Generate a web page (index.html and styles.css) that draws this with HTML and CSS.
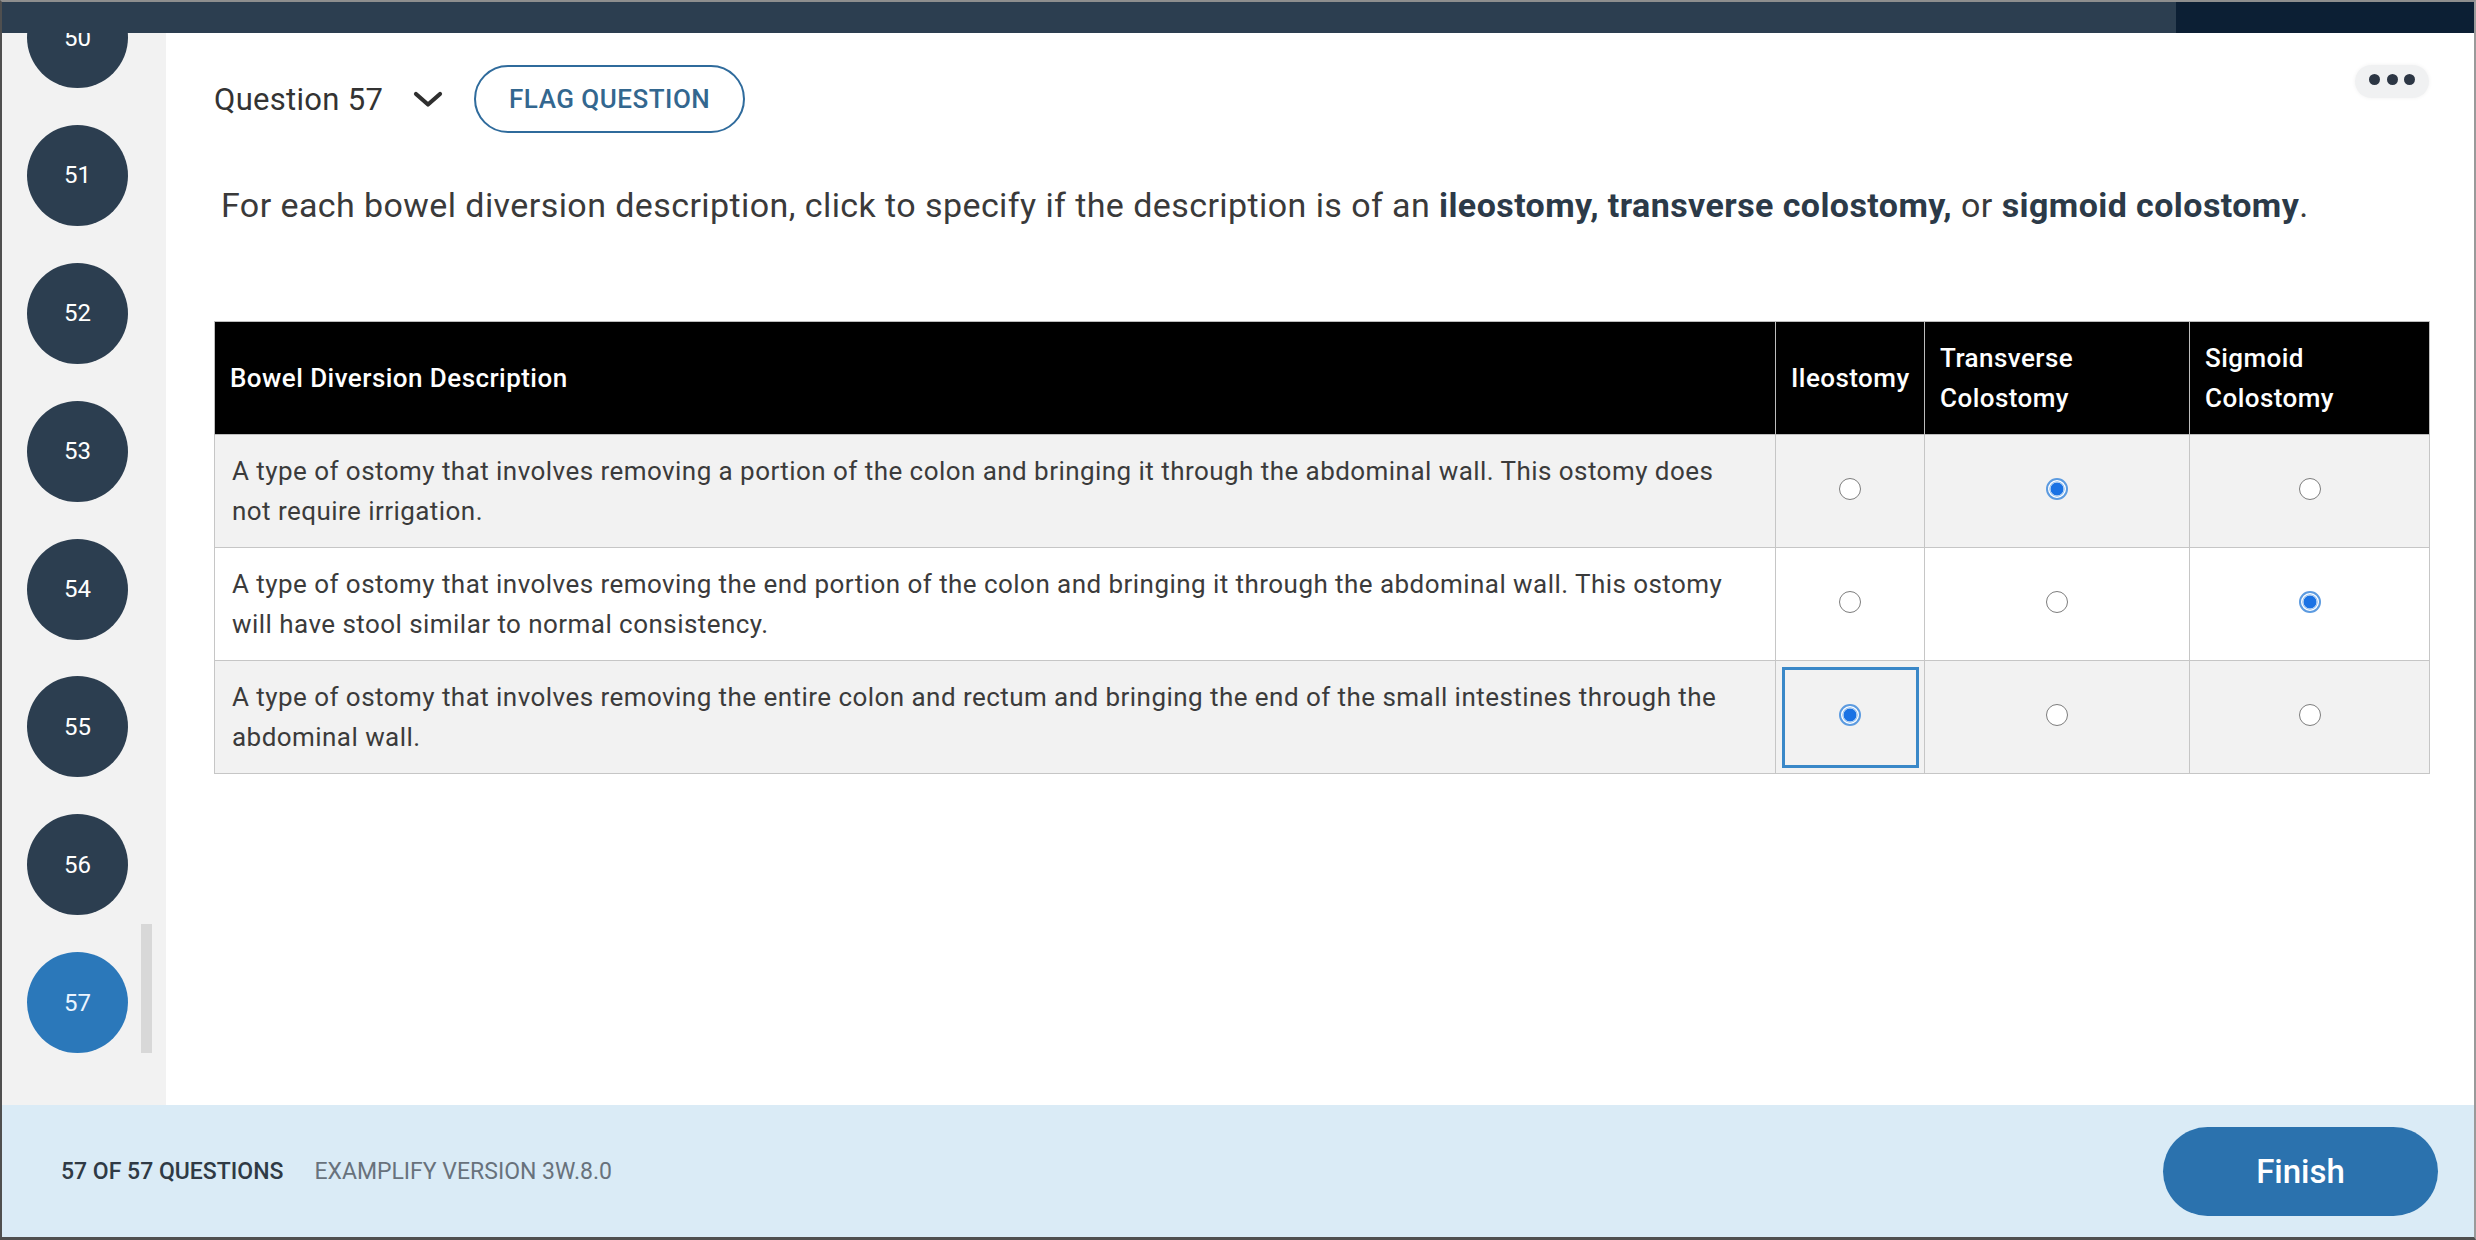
FILE: index.html
```html
<!DOCTYPE html>
<html lang="en">
<head>
<meta charset="utf-8">
<title>Question 57</title>
<link rel="stylesheet" href="styles.css">
</head>
<body>
<div class="window">
  <header class="topbar">
    <div class="topbar-main"></div>
    <div class="topbar-side"></div>
  </header>
  <div class="body">
    <nav class="sidebar">
      <ol class="qlist">
        <li class="qnum">50</li>
        <li class="qnum">51</li>
        <li class="qnum">52</li>
        <li class="qnum">53</li>
        <li class="qnum">54</li>
        <li class="qnum">55</li>
        <li class="qnum">56</li>
        <li class="qnum current">57</li>
      </ol>
      <div class="scroll-thumb"></div>
    </nav>
    <main class="main">
      <div class="qhead">
        <span class="qtitle">Question 57</span>
        <svg class="chev" viewBox="0 0 30 17" aria-hidden="true"><polyline points="3,3 15,13.5 27,3" fill="none" stroke="#2f2f2f" stroke-width="4.2" stroke-linecap="round" stroke-linejoin="round"/></svg>
        <button class="flag">FLAG QUESTION</button>
        <button class="more" aria-label="More"><span class="dot"></span><span class="dot"></span><span class="dot"></span></button>
      </div>
      <p class="prompt">For each bowel diversion description, click to specify if the description is of an <b>ileostomy, transverse colostomy,</b> or <b>sigmoid colostomy</b>.</p>
      <table class="grid">
        <colgroup>
          <col class="c-desc">
          <col class="c-ileo">
          <col class="c-trans">
          <col class="c-sig">
        </colgroup>
        <thead>
          <tr>
            <th>Bowel Diversion Description</th>
            <th>Ileostomy</th>
            <th>Transverse Colostomy</th>
            <th>Sigmoid Colostomy</th>
          </tr>
        </thead>
        <tbody>
          <tr class="alt">
            <td>A type of ostomy that involves removing a portion of the colon and bringing it through the abdominal wall. This ostomy does<br>not require irrigation.</td>
            <td class="choice"><input class="radio" type="radio" name="r1"></td>
            <td class="choice"><input class="radio" type="radio" name="r1" checked></td>
            <td class="choice"><input class="radio" type="radio" name="r1"></td>
          </tr>
          <tr>
            <td>A type of ostomy that involves removing the end portion of the colon and bringing it through the abdominal wall. This ostomy<br>will have stool similar to normal consistency.</td>
            <td class="choice"><input class="radio" type="radio" name="r2"></td>
            <td class="choice"><input class="radio" type="radio" name="r2"></td>
            <td class="choice"><input class="radio" type="radio" name="r2" checked></td>
          </tr>
          <tr class="alt">
            <td>A type of ostomy that involves removing the entire colon and rectum and bringing the end of the small intestines through the<br>abdominal wall.</td>
            <td class="choice focus"><input class="radio" type="radio" name="r3" checked></td>
            <td class="choice"><input class="radio" type="radio" name="r3"></td>
            <td class="choice"><input class="radio" type="radio" name="r3"></td>
          </tr>
        </tbody>
      </table>
    </main>
  </div>
  <footer class="footer">
    <span class="count">57 OF 57 QUESTIONS</span>
    <span class="version">EXAMPLIFY VERSION 3W.8.0</span>
    <button class="finish">Finish</button>
  </footer>
</div>
</body>
</html>
```
FILE: styles.css
```css
html, body {
  margin: 0;
  padding: 0;
}
body {
  width: 2476px;
  height: 1240px;
  overflow: hidden;
  background: #ffffff;
  font-family: Roboto, "Liberation Sans", Arial, sans-serif;
}
.window {
  box-sizing: border-box;
  height: 1240px;
  display: flex;
  flex-direction: column;
  border-top: 2px solid #8e8e8e;
  border-left: 2px solid #4f4f4f;
  border-right: 2px solid #9a9a9a;
  border-bottom: 3px solid #4f4f4f;
}
.topbar {
  height: 31px;
  flex: none;
  display: flex;
}
.topbar-main {
  flex: 1;
  background: #2c3e50;
}
.topbar-side {
  width: 298px;
  background: #0c1f34;
}
.body {
  flex: 1;
  display: flex;
  min-height: 0;
}
.sidebar {
  width: 164px;
  flex: none;
  background: #f2f2f2;
  position: relative;
  overflow: hidden;
}
.qlist {
  list-style: none;
  margin: -46px 0 0;
  padding: 0 0 0 25px;
  display: flex;
  flex-direction: column;
  gap: 36.9px;
}
.qnum {
  width: 101px;
  height: 101px;
  flex: none;
  border-radius: 50%;
  background: #2c3e50;
  color: #ffffff;
  display: flex;
  align-items: center;
  justify-content: center;
  font-size: 24px;
}
.qnum.current {
  background: #2b78ba;
  color: #eaf4ff;
}
.scroll-thumb {
  position: absolute;
  left: 139px;
  top: 891px;
  width: 11px;
  height: 129px;
  background: #d8d8d8;
}
.main {
  flex: 1;
  min-width: 0;
  padding: 32px 45px 0 48px;
}
.qhead {
  display: flex;
  align-items: center;
  height: 68px;
}
.qtitle {
  font-size: 31px;
  letter-spacing: 0.3px;
  color: #333333;
}
.chev {
  width: 30px;
  height: 17px;
  margin-left: 30px;
}
.flag {
  margin-left: 31px;
  box-sizing: border-box;
  width: 271px;
  height: 68px;
  border: 2.5px solid #2f6b9c;
  border-radius: 34px;
  background: #ffffff;
  color: #33678f;
  font-family: Roboto, "Liberation Sans", Arial, sans-serif;
  font-size: 26px;
  letter-spacing: 0.5px;
  font-weight: 500;
  padding: 0;
}
.more {
  margin-left: auto;
  align-self: flex-start;
  width: 74px;
  height: 33px;
  border: none;
  border-radius: 17px;
  background: #f0f1f2;
  box-shadow: 0 0 4px rgba(0, 0, 0, 0.06);
  display: flex;
  align-items: center;
  justify-content: center;
  gap: 6.5px;
  padding: 0 0 4px;
}
.dot {
  width: 11px;
  height: 11px;
  border-radius: 50%;
  background: #2c3644;
}
.prompt {
  margin: 51px 0 0;
  padding-left: 7px;
  font-size: 34px;
  letter-spacing: 0.42px;
  line-height: 42px;
  color: #3a3a3a;
}
.prompt b {
  color: #2c3a48;
  font-weight: 700;
}
.grid {
  margin-top: 95px;
  width: 2215px;
  table-layout: fixed;
  border-collapse: collapse;
  font-size: 26px;
  letter-spacing: 0.45px;
  line-height: 40px;
  color: #3b3b3b;
}
.c-desc { width: 1561px; }
.c-ileo { width: 149px; }
.c-trans { width: 265px; }
.c-sig { width: 240px; }
.grid th {
  background: #000000;
  color: #ffffff;
  font-weight: 500;
  text-align: left;
  vertical-align: middle;
  padding: 16px 15px;
  border: 1px solid #bdbdbd;
}
.grid td {
  padding: 16px 17px;
  border: 1px solid #c6c6c6;
  background: #ffffff;
  vertical-align: middle;
}
.grid tr.alt td {
  background: #f2f2f2;
}
.grid td.choice {
  text-align: center;
  padding-bottom: 20px;
}
.grid td.focus {
  outline: 3px solid #3a88c8;
  outline-offset: -9px;
}
.radio {
  appearance: none;
  -webkit-appearance: none;
  display: block;
  box-sizing: border-box;
  width: 22px;
  height: 22px;
  margin: 0 auto;
  border: 1.5px solid #7d7d7d;
  border-radius: 50%;
  background: #ffffff;
}
.radio:checked {
  border: 2px solid #5c9be0;
  background: radial-gradient(circle, #1a72e4 0 6px, #a9cbf1 6.6px 7.4px, #ffffff 8px);
}
.footer {
  height: 132px;
  flex: none;
  background: #daebf6;
  display: flex;
  align-items: center;
  padding: 0 36px 0 59px;
}
.count {
  font-size: 23px;
  font-weight: 500;
  color: #2f3a45;
}
.version {
  margin-left: 31px;
  font-size: 23px;
  color: #68727c;
}
.finish {
  margin-left: auto;
  width: 275px;
  height: 89px;
  border: none;
  border-radius: 45px;
  background: #2b72ae;
  color: #ffffff;
  font-family: Roboto, "Liberation Sans", Arial, sans-serif;
  font-size: 33px;
  font-weight: 500;
  padding: 0;
}
```
